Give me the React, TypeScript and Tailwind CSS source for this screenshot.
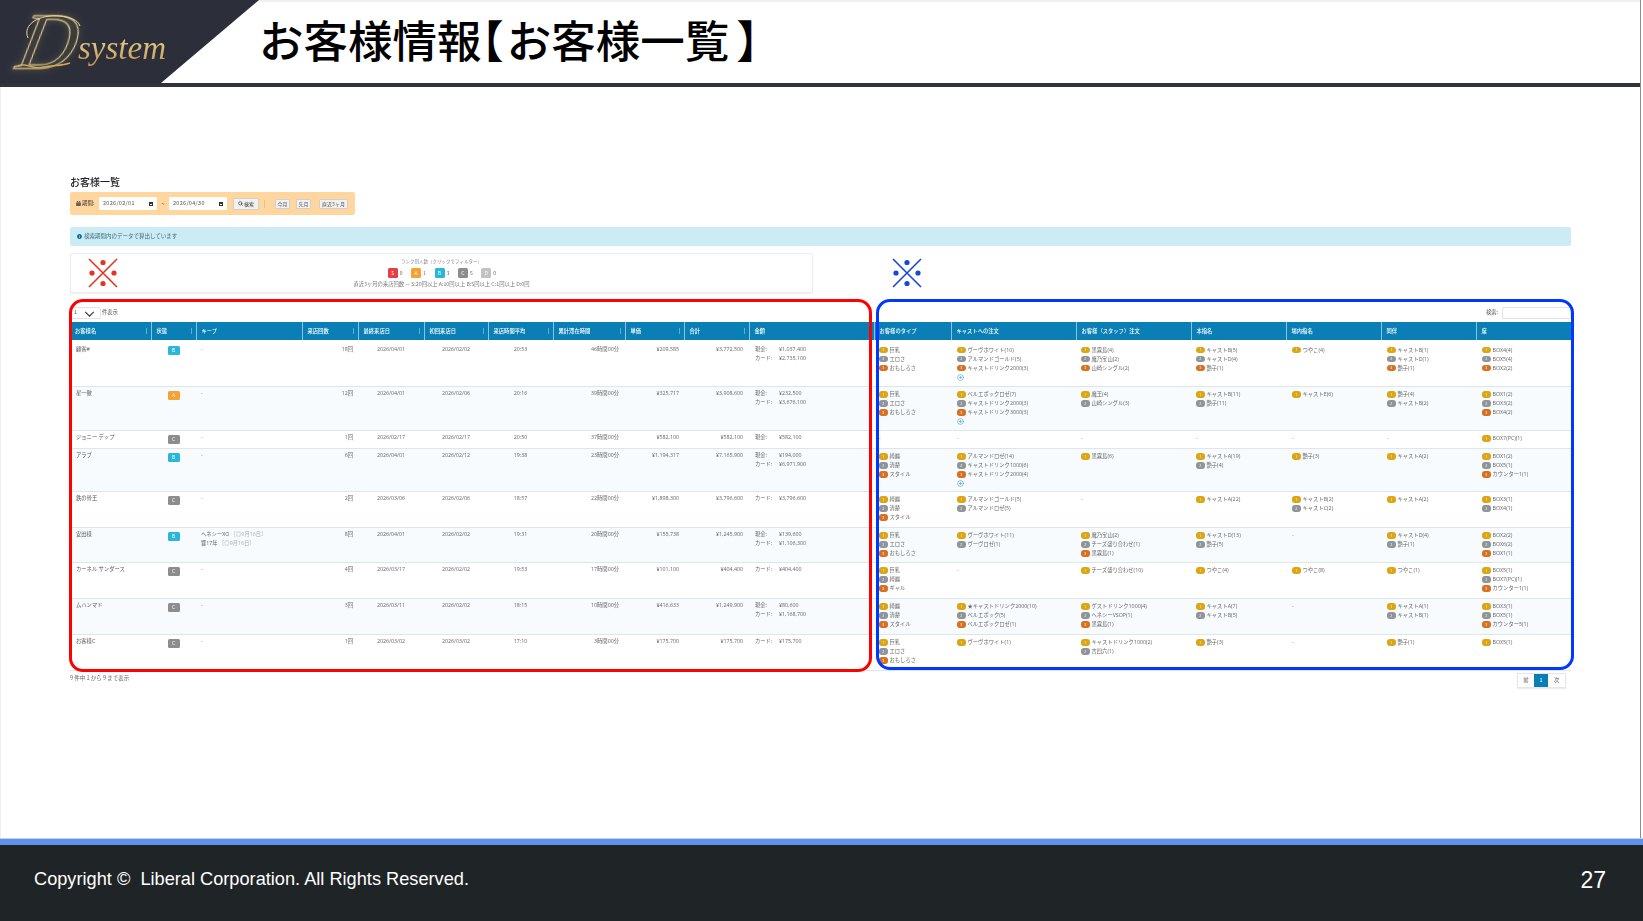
import { CirclePlus, Search } from "lucide-react";
import { FaCalendarAlt, FaInfoCircle } from "react-icons/fa";

type Rank = "S" | "A" | "B" | "C" | "D";

type Customer = {
  height: string;
  name: string;
  rank: Rank;
  keep?: string[];
  visits: string;
  last: string;
  first: string;
  avgTime: string;
  stay: string;
  unit: string;
  total: string;
  cash?: string;
  card?: string;
  types: string[];
  castOrders: string[];
  more?: boolean;
  staffOrders: string[];
  main: string[];
  inStore: string[];
  douhan: string[];
  seats: string[];
};

const customers: Customer[] = [
  {
    height: "h-[46px]", name: "顧客#", rank: "B", visits: "18回", last: "2026/04/01", first: "2026/02/02",
    avgTime: "20:53", stay: "46時間00分", unit: "¥209,585", total: "¥3,772,500", cash: "¥1,037,400", card: "¥2,735,100",
    types: ["巨乳", "エロさ", "おもしろさ"], castOrders: ["ヴーヴホワイト(10)", "アルマンドゴールド(5)", "キャストドリンク2000(3)"], more: true,
    staffOrders: ["黒霧島(4)", "魔乃宝山(2)", "山崎シングル(2)"], main: ["キャストB(5)", "キャストD(4)", "艶子(1)"],
    inStore: ["つやこ(4)"], douhan: ["キャストB(1)", "キャストD(1)", "艶子(1)"], seats: ["BOX4(4)", "BOX5(4)", "BOX2(2)"],
  },
  {
    height: "h-[44px]", name: "星一徹", rank: "A", visits: "12回", last: "2026/04/01", first: "2026/02/06",
    avgTime: "20:16", stay: "39時間00分", unit: "¥325,717", total: "¥3,908,600", cash: "¥232,500", card: "¥3,676,100",
    types: ["巨乳", "エロさ", "おもしろさ"], castOrders: ["ベルエポックロゼ(7)", "キャストドリンク2000(3)", "キャストドリンク3000(3)"], more: true,
    staffOrders: ["魔王(4)", "山崎シングル(3)"], main: ["キャストB(11)", "艶子(11)"],
    inStore: ["キャストE(6)"], douhan: ["艶子(4)", "キャストB(2)"], seats: ["BOX1(2)", "BOX3(2)", "BOX4(2)"],
  },
  {
    height: "h-[18px]", name: "ジョニー デップ", rank: "C", visits: "1回", last: "2026/02/17", first: "2026/02/17",
    avgTime: "20:50", stay: "37時間00分", unit: "¥582,100", total: "¥582,100", cash: "¥582,100",
    types: [], castOrders: [], staffOrders: [], main: [], inStore: [], douhan: [], seats: ["BOX7(PC)(1)"],
  },
  {
    height: "h-[43px]", name: "アラブ", rank: "B", visits: "6回", last: "2026/04/01", first: "2026/02/12",
    avgTime: "19:38", stay: "23時間00分", unit: "¥1,194,317", total: "¥7,165,900", cash: "¥194,000", card: "¥6,971,900",
    types: ["綺麗", "清楚", "スタイル"], castOrders: ["アルマンドロゼ(14)", "キャストドリンク1000(6)", "キャストドリンク2000(4)"], more: true,
    staffOrders: ["黒霧島(6)"], main: ["キャストA(19)", "艶子(4)"],
    inStore: ["艶子(3)"], douhan: ["キャストA(2)"], seats: ["BOX1(2)", "BOX5(1)", "カウンター1(1)"],
  },
  {
    height: "h-[36px]", name: "鉄の骨王", rank: "C", visits: "2回", last: "2026/03/06", first: "2026/02/06",
    avgTime: "18:57", stay: "22時間00分", unit: "¥1,898,300", total: "¥3,796,600", card: "¥3,796,600",
    types: ["綺麗", "清楚", "スタイル"], castOrders: ["アルマンドゴールド(5)", "アルマンドロゼ(5)"],
    staffOrders: [], main: ["キャストA(22)"],
    inStore: ["キャストB(2)", "キャストC(2)"], douhan: ["キャストA(2)"], seats: ["BOX3(1)", "BOX4(1)"],
  },
  {
    height: "h-[35px]", name: "安田様", rank: "B", keep: ["ヘネシーXO", "響17年"], visits: "8回", last: "2026/04/01", first: "2026/02/02",
    avgTime: "19:31", stay: "20時間00分", unit: "¥155,738", total: "¥1,245,900", cash: "¥139,600", card: "¥1,106,300",
    types: ["巨乳", "エロさ", "おもしろさ"], castOrders: ["ヴーヴホワイト(11)", "ヴーヴロゼ(1)"],
    staffOrders: ["魔乃宝山(2)", "チーズ盛り合わせ(1)", "黒霧島(1)"], main: ["キャストD(13)", "艶子(5)"],
    inStore: [], douhan: ["キャストD(4)", "艶子(1)"], seats: ["BOX2(2)", "BOX6(2)", "BOX1(1)"],
  },
  {
    height: "h-[36px]", name: "カーネル サンダース", rank: "C", visits: "4回", last: "2026/03/17", first: "2026/02/02",
    avgTime: "19:53", stay: "17時間00分", unit: "¥101,100", total: "¥404,400", card: "¥404,400",
    types: ["巨乳", "綺麗", "ギャル"], castOrders: [],
    staffOrders: ["チーズ盛り合わせ(10)"], main: ["つやこ(4)"],
    inStore: ["つやこ(8)"], douhan: ["つやこ(1)"], seats: ["BOX5(1)", "BOX7(PC)(1)", "カウンター1(1)"],
  },
  {
    height: "h-[36px]", name: "ムハンマド", rank: "C", visits: "3回", last: "2026/03/11", first: "2026/02/02",
    avgTime: "18:15", stay: "10時間00分", unit: "¥416,633", total: "¥1,249,900", cash: "¥80,600", card: "¥1,168,700",
    types: ["綺麗", "清楚", "スタイル"], castOrders: ["★キャストドリンク2000(10)", "ベルエポック(5)", "ベルエポックロゼ(1)"],
    staffOrders: ["ゲストドリンク1000(4)", "ヘネシーVSOP(1)", "黒霧島(1)"], main: ["キャストA(7)", "キャストB(5)"],
    inStore: [], douhan: ["キャストA(1)", "キャストB(1)"], seats: ["BOX3(1)", "BOX5(1)", "カウンター5(1)"],
  },
  {
    height: "h-[36px]", name: "お客様C", rank: "C", visits: "1回", last: "2026/03/02", first: "2026/03/02",
    avgTime: "17:10", stay: "3時間00分", unit: "¥175,700", total: "¥175,700", card: "¥175,700",
    types: ["巨乳", "エロさ", "おもしろさ"], castOrders: ["ヴーヴホワイト(1)"],
    staffOrders: ["キャストドリンク1000(2)", "吉四六(1)"], main: ["艶子(3)"],
    inStore: [], douhan: ["艶子(1)"], seats: ["BOX5(1)"],
  },
];

const columns = [
  { label: "お客様名", width: "w-[81px]", sort: true },
  { label: "状態", width: "w-[45px]", sort: true },
  { label: "キープ", width: "w-[106px]" },
  { label: "来店回数", width: "w-[56px]", sort: true },
  { label: "最終来店日", width: "w-[66px]", sort: true },
  { label: "初回来店日", width: "w-[64px]", sort: true },
  { label: "来店時間平均", width: "w-[65px]", sort: true },
  { label: "累計滞在時間", width: "w-[72px]", sort: true },
  { label: "単価", width: "w-[59px]", sort: true },
  { label: "合計", width: "w-[65px]", sort: true },
  { label: "金額", width: "w-[125px]" },
  { label: "お客様のタイプ", width: "w-[77px]" },
  { label: "キャストへの注文", width: "w-[125px]" },
  { label: "お客様（スタッフ）注文", width: "w-[115px]" },
  { label: "本指名", width: "w-[95px]" },
  { label: "場内指名", width: "w-[95px]" },
  { label: "同伴", width: "w-[95px]" },
  { label: "席", width: "w-[95px]" },
];

const rankColors: Record<Rank, string> = {
  S: "bg-[#e53e45]",
  A: "bg-[#f6a233]",
  B: "bg-[#29b6d8]",
  C: "bg-[#8d8d8d]",
  D: "bg-[#c2c2c2]",
};

const pillColors = ["bg-[#dba514]", "bg-[#909498]", "bg-[#d9701f]"];

const rankCounts: { rank: Rank; count: number }[] = [
  { rank: "S", count: 0 },
  { rank: "A", count: 1 },
  { rank: "B", count: 3 },
  { rank: "C", count: 5 },
  { rank: "D", count: 0 },
];

function RankedList({ items, more }: { items: string[]; more?: boolean }) {
  if (items.length === 0) return <span className="text-[#999]">-</span>;
  return (
    <div className="flex flex-col">
      {items.map((item, i) => (
        <div key={item} className="flex h-[9px] items-center gap-[2px] whitespace-nowrap">
          <span
            className={`flex h-[6.5px] w-[8.5px] shrink-0 items-center justify-center rounded-[3px] text-[3.5px] leading-none text-white ${pillColors[i]}`}
          >
            {i + 1}
          </span>
          <span>{item}</span>
        </div>
      ))}
      {more && <CirclePlus className="mt-[1px] h-[7px] w-[7px] text-[#4a9cc7]" strokeWidth={2} />}
    </div>
  );
}

function CrossMark({ color, className }: { color: string; className?: string }) {
  return (
    <svg viewBox="0 0 30 30" className={`h-[30px] w-[30px] ${className ?? ""}`}>
      <path d="M1 1 L29 29 M29 1 L1 29" stroke={color} strokeWidth="1.6" fill="none" />
      <circle cx="15" cy="4.5" r="2.6" fill={color} />
      <circle cx="15" cy="25.5" r="2.6" fill={color} />
      <circle cx="4" cy="15" r="2.6" fill={color} />
      <circle cx="26" cy="15" r="2.6" fill={color} />
    </svg>
  );
}

function DateField({ value }: { value: string }) {
  return (
    <div className="flex h-[13px] w-[58px] items-center justify-between rounded-[1px] bg-white px-[4px] text-[5.5px] tracking-[0.3px] text-[#555]">
      <span>{value}</span>
      <span className="h-[4px] w-[4px] border border-t-2 border-[#333]" />
    </div>
  );
}

function SmallButton({ label, width }: { label: string; width: string }) {
  return (
    <span
      className={`flex h-[10px] items-center justify-center rounded-[1px] border border-[#cfcfcf] bg-[#f1f1f1] text-[5px] text-[#555] ${width}`}
    >
      {label}
    </span>
  );
}

function Logo() {
  return (
    <div className="relative h-full w-[259px] shrink-0 bg-[#2c2f3a] [clip-path:polygon(0_0,100%_0,161px_100%,0_100%)]">
      <span className="absolute left-[20px] top-[2px] -skew-x-12 font-['Liberation_Serif',serif] text-[80px] italic leading-[80px] text-transparent drop-shadow-[0_0_3px_#a98a4a] [-webkit-text-stroke:1px_#f0dfa6]">
        D
      </span>
      <span className="absolute left-[78px] top-[27px] bg-gradient-to-b from-[#f5e6b0] to-[#c08f3c] bg-clip-text pr-[4px] font-['Liberation_Serif',serif] text-[33px] italic leading-[42px] text-transparent">
        system
      </span>
      <svg viewBox="0 0 100 83" className="absolute left-0 top-0 h-[83px] w-[100px]" fill="none">
        <path d="M28 38 C22 24 40 14 60 16 C70 17 78 20 80 26" stroke="#ecd999" strokeWidth="1" />
        <path d="M18 66 C28 62 30 70 44 67 C54 65 62 66 70 63" stroke="#d4a954" strokeWidth="1.4" />
      </svg>
    </div>
  );
}

export default function App() {
  return (
    <div className="flex h-screen flex-col overflow-hidden bg-white font-['Noto_Sans_CJK_JP',sans-serif]">
      <div className="mr-[2px] flex min-h-0 flex-1 flex-col border-r border-[#8c8c8c]">
        <header className="flex h-[87px] shrink-0 border-b-4 border-[#30343f] bg-gradient-to-b from-[#f0f0f0] from-[2px] to-white to-[2px]">
          <Logo />
          <h1 className="pt-[11px] text-[44.5px] font-medium leading-[56px] text-black">
            お客様情報
            <span className="pr-[3px] [font-feature-settings:'halt']">【</span>
            お客様一覧
            <span className="pl-[7px] [font-feature-settings:'halt']">】</span>
          </h1>
        </header>

        <main className="min-h-0 flex-1 pl-[70px] pr-[70px] pt-[88px] shadow-[inset_1px_0_0_#eeeeee]">
          <div className="w-[1501px]">
            <div className="blur-[0.3px]">
              <h2 className="h-[17px] text-[10px] font-medium leading-[14px] text-[#222]">お客様一覧</h2>

              <div className="flex h-[23px] w-[285px] items-center rounded-[2px] bg-[#ffd79e] pl-[6px]">
                <span className="flex w-[23px] items-center gap-[1px] text-[5.5px] text-[#333]">
                  <FaCalendarAlt className="h-[5px] w-[5px]" />
                  期間:
                </span>
                <DateField value="2026/02/01" />
                <span className="w-[12px] text-center text-[6px] text-[#555]">~</span>
                <DateField value="2026/04/30" />
                <span className="ml-[6px] flex h-[12px] w-[26px] items-center justify-center gap-[1px] rounded-[1px] border border-[#d0d0d0] bg-[#f1f1f1] text-[5px] text-[#333]">
                  <Search className="h-[5px] w-[5px]" strokeWidth={3} />
                  検索
                </span>
                <span className="ml-[5px] h-[8px] w-px bg-[#d9c3a0]" />
                <span className="ml-[10px]">
                  <SmallButton label="今月" width="w-[15px]" />
                </span>
                <span className="ml-[6px]">
                  <SmallButton label="先月" width="w-[15px]" />
                </span>
                <span className="ml-[8px]">
                  <SmallButton label="直近3ヶ月" width="w-[29px]" />
                </span>
              </div>

              <div className="mt-[12px] flex h-[19px] items-center gap-[2px] rounded-[2px] bg-[#cbebf5] pl-[7px] text-[5.5px] text-[#3d6a7c]">
                <FaInfoCircle className="h-[5px] w-[5px] text-[#0c6a94]" />
                検索期間内のデータで算出しています
              </div>
            </div>

            <div className="mt-[7px] flex items-center">
              <div className="relative flex h-[40px] w-[743px] flex-col items-center rounded-[2px] border border-[#e9eef0] bg-white pt-[3px] shadow-[0_1px_1px_#f0f0f0]">
                <CrossMark color="#e8321e" className="absolute left-[17px] top-[4px]" />
                <div className="flex flex-col items-center blur-[0.3px]">
                  <span className="h-[8px] text-[4.5px] leading-[8px] text-[#888]">ランク別人数（クリックでフィルター）</span>
                  <div className="mt-[3px] -ml-[4px] flex h-[10px] gap-[13.4px]">
                    {rankCounts.map(({ rank, count }) => (
                      <span key={rank} className="flex w-[10px] items-center text-[5px] text-[#666]">
                        <span
                          className={`mr-[2px] flex h-[10px] w-[10px] shrink-0 items-center justify-center rounded-[1.5px] text-white ${rankColors[rank]}`}
                        >
                          {rank}
                        </span>
                        {count}
                      </span>
                    ))}
                  </div>
                  <span className="mt-[2px] h-[8px] text-[5.3px] leading-[8px] text-[#777]">
                    直近3ヶ月の来店回数 — S:20回以上 A:10回以上 B:5回以上 C:1回以上 D:0回
                  </span>
                </div>
              </div>
              <CrossMark color="#1746d8" className="ml-[79px]" />
            </div>

            <div className="relative mt-[14px]">
              <div className="blur-[0.3px]">
                <div className="flex h-[12px] items-center justify-between text-[5.3px] text-[#555]">
                  <div className="flex items-center gap-[1px]">
                    <span className="relative flex h-[12px] w-[31px] items-center rounded-[1px] border border-[#e4e4e4] pl-[3px]">
                      1
                      <svg viewBox="0 0 12 7" className="absolute left-[13px] top-[3px] h-[6px] w-[11px]" fill="none">
                        <path d="M1 1 L6 6 L11 1" stroke="#333" strokeWidth="1.3" />
                      </svg>
                    </span>
                    件表示
                  </div>
                  <div className="flex items-center gap-[4px]">
                    検索:
                    <span className="h-[12px] w-[69px] rounded-[1px] border border-[#e4e4e4] bg-white" />
                  </div>
                </div>

                <table className="mt-[3px] w-[1501px] table-fixed border-collapse font-['Open_Sans','Noto_Sans_CJK_JP',sans-serif] text-[5.3px] leading-[9px] text-[#666]">
                  <colgroup>
                    {columns.map((col) => (
                      <col key={col.label} className={col.width} />
                    ))}
                  </colgroup>
                  <thead>
                    <tr className="h-[18px] bg-[#0a7fb5] text-white">
                      {columns.map((col) => (
                        <th
                          key={col.label}
                          className="relative overflow-hidden whitespace-nowrap border-r border-[#8cc4de] pl-[5px] text-left font-medium last:border-r-0"
                        >
                          {col.label}
                          {col.sort && (
                            <span className="absolute right-[4px] top-[6px] h-[6px] w-[1px] bg-[#5fb0d4]" />
                          )}
                        </th>
                      ))}
                    </tr>
                  </thead>
                  <tbody>
                    {customers.map((c, i) => {
                      const textTop = i === 0 ? "pt-[4.5px]" : "pt-[2.5px]";
                      const badgeTop = i === 0 ? "pt-[6px]" : "pt-[4px]";
                      const listTop = i === 0 ? "pt-[5.5px]" : "pt-[3.5px]";
                      return (
                        <tr
                          key={c.name}
                          className={`border-b border-[#dfe6ea] align-top ${c.height} ${i % 2 === 1 ? "bg-[#f7fbfd]" : "bg-white"}`}
                        >
                          <td className={`whitespace-nowrap pl-[6px] text-[#555] ${textTop}`}>{c.name}</td>
                          <td className={badgeTop}>
                            <span
                              className={`mx-auto flex h-[9px] w-[12px] items-center justify-center rounded-[1.5px] text-[5px] text-white ${rankColors[c.rank]}`}
                            >
                              {c.rank}
                            </span>
                          </td>
                          <td className={`pl-[5px] text-[#999] ${textTop}`}>
                            {c.keep
                              ? c.keep.map((k) => (
                                  <div key={k} className="whitespace-nowrap text-[#666]">
                                    {k} <span className="text-[#aaa]">［◎9月16日］</span>
                                  </div>
                                ))
                              : "-"}
                          </td>
                          <td className={`pr-[5px] text-right ${textTop}`}>{c.visits}</td>
                          <td className={`text-center ${textTop}`}>{c.last}</td>
                          <td className={`text-center ${textTop}`}>{c.first}</td>
                          <td className={`text-center ${textTop}`}>{c.avgTime}</td>
                          <td className={`pr-[6px] text-right ${textTop}`}>{c.stay}</td>
                          <td className={`pr-[5px] text-right ${textTop}`}>{c.unit}</td>
                          <td className={`pr-[6px] text-right ${textTop}`}>{c.total}</td>
                          <td className={`pl-[6px] ${textTop}`}>
                            {c.cash && (
                              <div className="flex">
                                <span className="w-[24px]">現金:</span>
                                {c.cash}
                              </div>
                            )}
                            {c.card && (
                              <div className="flex">
                                <span className="w-[24px]">カード:</span>
                                {c.card}
                              </div>
                            )}
                          </td>
                          <td className={`pl-[5px] ${listTop}`}>
                            <RankedList items={c.types} />
                          </td>
                          <td className={`pl-[6px] ${listTop}`}>
                            <RankedList items={c.castOrders} more={c.more} />
                          </td>
                          <td className={`pl-[5px] ${listTop}`}>
                            <RankedList items={c.staffOrders} />
                          </td>
                          <td className={`pl-[5px] ${listTop}`}>
                            <RankedList items={c.main} />
                          </td>
                          <td className={`pl-[6px] ${listTop}`}>
                            <RankedList items={c.inStore} />
                          </td>
                          <td className={`pl-[6px] ${listTop}`}>
                            <RankedList items={c.douhan} />
                          </td>
                          <td className={`pl-[6px] ${listTop}`}>
                            <RankedList items={c.seats} />
                          </td>
                        </tr>
                      );
                    })}
                  </tbody>
                </table>

                <div className="mt-[2px] flex items-start justify-between pr-[5px] text-[5.5px] text-[#666]">
                  <span className="pt-[1px]">9 件中 1 から 9 まで表示</span>
                  <div className="flex h-[15px] border border-[#e6e6e6] shadow-[0_1px_1px_#eeeeee]">
                    <span className="flex w-[16px] items-center justify-center">前</span>
                    <span className="flex w-[14px] items-center justify-center bg-[#0a7fb5] text-white">1</span>
                    <span className="flex w-[17px] items-center justify-center">次</span>
                  </div>
                </div>
              </div>

              <div className="pointer-events-none absolute -left-px -top-[8px] h-[373px] w-[803px] rounded-[14px] border-[3px] border-[#ff0000]" />
              <div className="pointer-events-none absolute left-[806px] -top-[8px] h-[371px] w-[698px] rounded-[14px] border-[3px] border-[#0038ff]" />
            </div>
          </div>
        </main>
      </div>

      <footer className="shrink-0">
        <div className="h-[7px] border-t border-[#b9cff3] bg-[#5f92e8]" />
        <div className="flex h-[76px] items-center justify-between bg-[#1f2427] pb-[6px] pl-[34px] pr-[37px] font-['Liberation_Sans',sans-serif] text-white">
          <span className="text-[18.2px]">Copyright ©&nbsp; Liberal Corporation. All Rights Reserved.</span>
          <span className="text-[23px]">27</span>
        </div>
      </footer>
    </div>
  );
}
